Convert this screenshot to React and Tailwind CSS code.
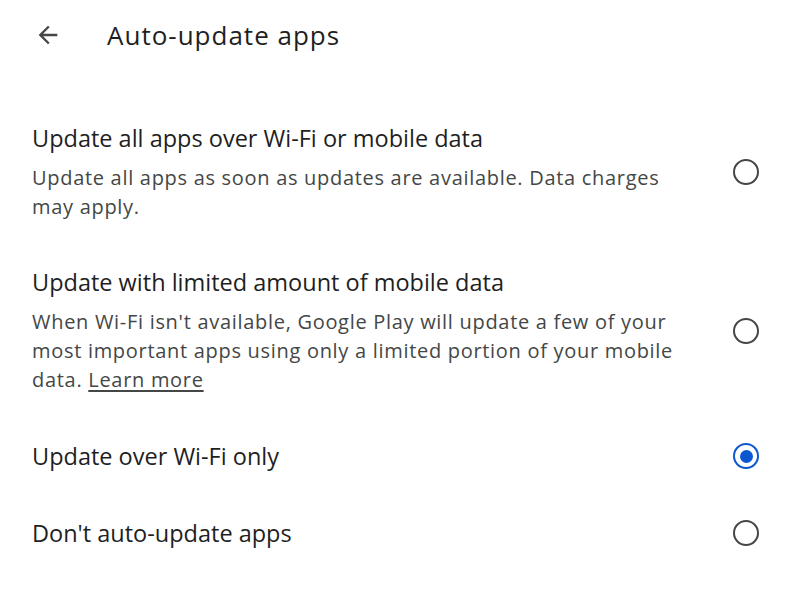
import React, { useState } from 'react';

const options = [
  {
    id: 'any',
    title: 'Update all apps over Wi-Fi or mobile data',
    desc: 'Update all apps as soon as updates are available. Data charges may apply.',
    pad: 'py-[23px]',
  },
  {
    id: 'limited',
    title: 'Update with limited amount of mobile data',
    desc: "When Wi-Fi isn't available, Google Play will update a few of your most important apps using only a limited portion of your mobile data.",
    link: 'Learn more',
    pad: 'py-[23px]',
  },
  { id: 'wifi', title: 'Update over Wi-Fi only', pad: 'py-[24px]' },
  { id: 'never', title: "Don't auto-update apps", pad: 'py-[23px]' },
];

const Radio = ({ checked }) => (
  <div
    className={`w-[26px] h-[26px] rounded-full border-[2.5px] flex items-center justify-center shrink-0 ${
      checked ? 'border-[#0b57d0]' : 'border-[#444746]'
    }`}
  >
    {checked && <div className="w-[13px] h-[13px] rounded-full bg-[#0b57d0]" />}
  </div>
);

export default function App() {
  const [selected, setSelected] = useState('wifi');

  return (
    <div className="w-[800px] h-[602px] bg-white overflow-hidden font-['Open_Sans',sans-serif] text-[#1f1f1f]">
      {/* Header */}
      <div className="h-[70px] flex items-center">
        <button className="w-[48px] h-[48px] ml-[24px] flex items-center justify-center text-[#444746]">
          <svg width="28" height="28" viewBox="0 0 24 24" fill="currentColor">
            <path d="M20 11H7.83l5.59-5.59L12 4l-8 8 8 8 1.41-1.41L7.83 13H20v-2z" />
          </svg>
        </button>
        <h1 className="ml-[35px] text-[26px] leading-none tracking-[1px]">Auto-update apps</h1>
      </div>

      <div className="h-[30px]" />

      {/* Options */}
      <div>
        {options.map((o) => (
          <div
            key={o.id}
            onClick={() => setSelected(o.id)}
            className={`flex items-center pl-[32px] pr-[41px] cursor-pointer ${o.pad}`}
          >
            <div className="flex-1 pr-[30px]">
              <div className="text-[23.5px] leading-[30px]">{o.title}</div>
              {o.desc && (
                <div className="mt-[10px] text-[20px] leading-[29px] text-[#444746] tracking-[0.7px]">
                  {o.desc}
                  {o.link && (
                    <>
                      {' '}
                      <span className="underline underline-offset-[3px]">{o.link}</span>
                    </>
                  )}
                </div>
              )}
            </div>
            <Radio checked={selected === o.id} />
          </div>
        ))}
      </div>
    </div>
  );
}
